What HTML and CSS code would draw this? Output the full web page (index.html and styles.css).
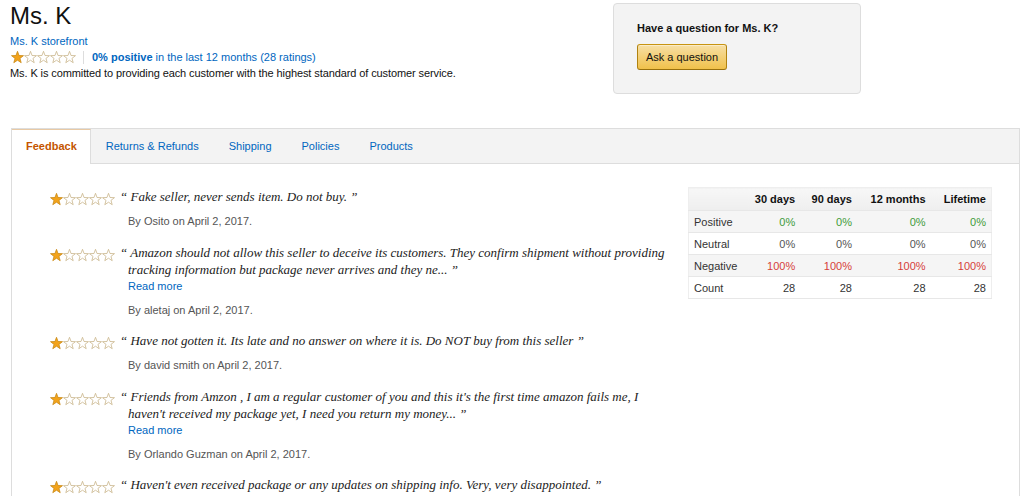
FILE: index.html
```html
<!DOCTYPE html>
<html lang="en">
<head>
<meta charset="utf-8">
<title>Ms. K</title>
<link rel="stylesheet" href="styles.css">
</head>
<body>
<svg width="0" height="0" class="defs" aria-hidden="true">
  <defs>
    <polygon id="star" points="6.5,0.3 8.03,4.5 12.49,4.65 8.97,7.4 10.2,11.7 6.5,9.2 2.8,11.7 4.03,7.4 0.51,4.65 4.97,4.5"/>
    <g id="stars1">
      <use href="#star" x="0" class="s-full"/>
      <use href="#star" x="13" class="s-empty"/>
      <use href="#star" x="26" class="s-empty"/>
      <use href="#star" x="39" class="s-empty"/>
      <use href="#star" x="52" class="s-empty"/>
    </g>
  </defs>
</svg>

<div class="top">
  <div class="seller">
    <h1 class="name">Ms. K</h1>
    <a class="link store" href="#">Ms. K storefront</a>
    <div class="rating-row">
      <svg class="stars" width="66" height="13" viewBox="0 0 66 13"><use href="#stars1"/></svg>
      <span class="sep"></span>
      <a class="link" href="#"><b>0% positive</b> in the last 12 months (28 ratings)</a>
    </div>
    <p class="desc">Ms. K is committed to providing each customer with the highest standard of customer service.</p>
  </div>
  <div class="qbox">
    <div class="qtitle">Have a question for Ms. K?</div>
    <button class="ask">Ask a question</button>
  </div>
</div>

<div class="tabs-box">
  <ul class="tabs">
    <li class="tab active">Feedback</li>
    <li class="tab">Returns &amp; Refunds</li>
    <li class="tab">Shipping</li>
    <li class="tab">Policies</li>
    <li class="tab">Products</li>
  </ul>
  <div class="feedback">
    <div class="reviews">
      <div class="review">
        <svg class="stars" width="66" height="13" viewBox="0 0 66 13"><use href="#stars1"/></svg>
        <div class="rbody">
          <p class="quote">“ Fake seller, never sends item. Do not buy. ”</p>
          <p class="by">By Osito on April 2, 2017.</p>
        </div>
      </div>
      <div class="review">
        <svg class="stars" width="66" height="13" viewBox="0 0 66 13"><use href="#stars1"/></svg>
        <div class="rbody">
          <p class="quote">“ Amazon should not allow this seller to deceive its customers. They confirm shipment without providing tracking information but package never arrives and they ne... ”</p>
          <a class="link more" href="#">Read more</a>
          <p class="by">By aletaj on April 2, 2017.</p>
        </div>
      </div>
      <div class="review">
        <svg class="stars" width="66" height="13" viewBox="0 0 66 13"><use href="#stars1"/></svg>
        <div class="rbody">
          <p class="quote">“ Have not gotten it. Its late and no answer on where it is. Do NOT buy from this seller ”</p>
          <p class="by">By david smith on April 2, 2017.</p>
        </div>
      </div>
      <div class="review">
        <svg class="stars" width="66" height="13" viewBox="0 0 66 13"><use href="#stars1"/></svg>
        <div class="rbody">
          <p class="quote">“ Friends from Amzon , I am a regular customer of you and this it's the first time amazon fails me, I haven't received my package yet, I need you return my money... ”</p>
          <a class="link more" href="#">Read more</a>
          <p class="by">By Orlando Guzman on April 2, 2017.</p>
        </div>
      </div>
      <div class="review">
        <svg class="stars" width="66" height="13" viewBox="0 0 66 13"><use href="#stars1"/></svg>
        <div class="rbody">
          <p class="quote">“ Haven't even received package or any updates on shipping info. Very, very disappointed. ”</p>
        </div>
      </div>
    </div>
    <table class="stats">
      <thead>
        <tr><th class="c0"></th><th class="c1">30 days</th><th class="c2">90 days</th><th class="c3">12 months</th><th class="c4">Lifetime</th></tr>
      </thead>
      <tbody>
        <tr class="alt"><td>Positive</td><td class="pos">0%</td><td class="pos">0%</td><td class="pos">0%</td><td class="pos">0%</td></tr>
        <tr><td>Neutral</td><td class="neu">0%</td><td class="neu">0%</td><td class="neu">0%</td><td class="neu">0%</td></tr>
        <tr class="alt"><td>Negative</td><td class="neg">100%</td><td class="neg">100%</td><td class="neg">100%</td><td class="neg">100%</td></tr>
        <tr><td>Count</td><td class="num">28</td><td class="num">28</td><td class="num">28</td><td class="num">28</td></tr>
      </tbody>
    </table>
  </div>
</div>
</body>
</html>
```

FILE: styles.css
```css
* { box-sizing: border-box; }
html, body { margin: 0; padding: 0; background: #fff; overflow: hidden; }
body {
  font-family: "Liberation Sans", Arial, sans-serif;
  font-size: 11px;
  color: #111;
  width: 1024px;
  height: 496px;
}
.defs { position: absolute; width: 0; height: 0; }
.stars { overflow: visible; }
.s-full { fill: #f3a31b; stroke: #c98a16; stroke-width: 0.8; }
.s-empty { fill: #fff; stroke: #c9b58a; stroke-width: 0.8; }

.link { color: #0066c0; text-decoration: none; }

.top { display: flex; padding-left: 10px; }
.seller { flex: 0 0 603px; }
.name {
  margin: 4px 0 0;
  font-size: 24px;
  line-height: 24px;
  font-weight: normal;
  color: #111;
}
.store { display: block; margin-top: 5px; line-height: 16px; }
.rating-row { display: flex; align-items: center; height: 16px; }
.rating-row .stars { margin-left: 1px; }
.sep { width: 1px; height: 13px; background: #ddd; margin: 0 8px 0 6px; }
.rating-row b { font-weight: bold; }
.desc { margin: 0; line-height: 16px; color: #111; letter-spacing: -0.1px; }

.qbox {
  margin-top: 3px;
  width: 248px;
  height: 91px;
  background: #f3f3f3;
  border: 1px solid #ddd;
  border-radius: 4px;
  padding: 16px 0 0 23px;
}
.qtitle { font-weight: bold; line-height: 16px; color: #111; }
.ask {
  margin-top: 8px;
  width: 90px;
  height: 26px;
  padding: 0;
  font-family: "Liberation Sans", Arial, sans-serif;
  font-size: 11px;
  color: #111;
  border: 1px solid #a88734;
  border-color: #c89411 #b0820f #99710d;
  border-radius: 3px;
  background: linear-gradient(to bottom, #f7dfa5, #f0c14b);
  box-shadow: 0 1px 0 rgba(255,255,255,.4) inset;
}

.tabs-box {
  margin: 34px 4px 0 11px;
  border: 1px solid #ddd;
  border-bottom: none;
  height: 368px;
  overflow: hidden;
}
.tabs {
  list-style: none;
  margin: 0;
  padding: 0;
  display: flex;
  height: 35px;
  background: #f3f3f3;
  border-bottom: 1px solid #ddd;
}
.tab {
  padding: 0 15px;
  line-height: 34px;
  color: #0066c0;
}
.tab.active {
  padding: 0 13px 0 14px;
  background: #fff;
  color: #c45500;
  font-weight: bold;
  border-right: 1px solid #ddd;
  border-top: 1px solid #e8c9a4;
  line-height: 33px;
  height: 35px;
}

.feedback {
  display: flex;
  justify-content: space-between;
  padding: 24px 27px 0 38px;
}
.reviews { width: 620px; }
.review { display: flex; align-items: flex-start; margin-bottom: 14.5px; }
.review .stars { flex: 0 0 66px; margin: 5px 4px 0 0; }
.rbody { width: 550px; padding-left: 8px; }
.quote {
  margin: 0;
  font-family: "Liberation Serif", Georgia, serif;
  font-style: italic;
  font-size: 13px;
  line-height: 17px;
  color: #222;
  text-indent: -8px;
}
.more { display: block; line-height: 16px; }
.by { margin: 8px 0 0; line-height: 16px; color: #555; }

.stats {
  width: 304px;
  border-collapse: collapse;
  border: 1px solid #eee;
  align-self: flex-start;
  margin-top: -1px;
}
.stats th, .stats td {
  height: 22px;
  padding: 0 5px;
  text-align: right;
  border-bottom: 1px solid #e7e7e7;
}
.stats th {
  font-weight: bold;
  color: #111;
  height: 23px;
  background: linear-gradient(to bottom, #f7f7f7, #eeeeee);
}
.stats td:first-child { text-align: left; color: #333; }
.stats tr.alt td { background: #f5f5f5; }
.c0 { width: 59px; }
.c1 { width: 53px; }
.c2 { width: 57px; }
.c3 { width: 74px; }
.c4 { width: 61px; }
.pos { color: #3f9b3a; }
.neu { color: #555; }
.neg { color: #d6403a; }
.num { color: #333; }
```
